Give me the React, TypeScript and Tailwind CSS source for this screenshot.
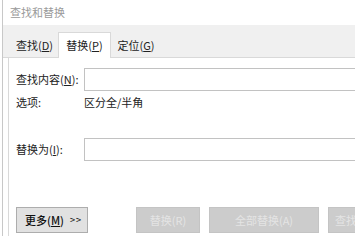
export default function App() {
  const font = { fontFamily: '"Noto Sans CJK SC", "Noto Sans", sans-serif' };

  return (
    <div className="h-[236px] w-[355px] overflow-hidden bg-white text-[11px] text-[#222]" style={font}>
      <div className="ml-[2px] flex h-full flex-col border-l border-[#c8c8c8]">
        {/* 标题栏 */}
        <div className="flex h-[25px] shrink-0 items-center pl-[7px] text-[11px] text-[#9a9a9a]">
          查找和替换
        </div>

        {/* 选项卡 */}
        <div className="flex h-[33px] shrink-0 items-end border-b border-[#d9d9d9] bg-[#f0f0f0] pl-[5px]">
          <div className="flex h-[24px] w-[50px] items-center justify-center pl-[3px]">
            查找(<u>D</u>)
          </div>
          <div className="-mb-px flex h-[26px] w-[53px] items-center justify-center border border-b-0 border-[#d9d9d9] bg-white">
            替换(<u>P</u>)
          </div>
          <div className="flex h-[24px] w-[50px] items-center justify-center">
            定位(<u>G</u>)
          </div>
        </div>

        {/* 内容 */}
        <div className="ml-[5px] flex flex-1 flex-col border-l border-[#d9d9d9] pl-[7px] pt-[10px]">
          <div className="flex h-[23px] items-center">
            <span className="w-[68px] shrink-0">
              查找内容(<u>N</u>):
            </span>
            <div className="h-full w-[300px] shrink-0 border border-[#c2c2c2] bg-white" />
          </div>
          <div className="flex h-[22px] items-center">
            <span className="w-[68px] shrink-0">选项:</span>
            <span>区分全/半角</span>
          </div>
          <div className="mt-[25px] flex h-[23px] items-center">
            <span className="w-[68px] shrink-0">
              替换为(<u>I</u>):
            </span>
            <div className="h-full w-[300px] shrink-0 border border-[#c2c2c2] bg-white" />
          </div>

          {/* 按钮 */}
          <div className="mt-[46px] flex h-[26px] items-stretch">
            <button
              type="button"
              className="flex w-[72px] shrink-0 items-center gap-[6px] border border-[#adadad] bg-[#e1e1e1] pl-[8px] text-[11px] font-medium text-[#111]"
            >
              <span>
                更多(<u>M</u>)
              </span>
              <span className="text-[9px] tracking-[1px]">&gt;&gt;</span>
            </button>
            <button
              type="button"
              className="ml-[48px] flex w-[64px] shrink-0 items-center justify-center border border-[#c4c4c4] bg-[#cccccc] text-[11px] text-[#e4e4e4]"
            >
              替换(R)
            </button>
            <button
              type="button"
              className="ml-[9px] flex w-[110px] shrink-0 items-center justify-center border border-[#c4c4c4] bg-[#cccccc] text-[11px] text-[#e4e4e4]"
            >
              全部替换(A)
            </button>
            <button
              type="button"
              className="ml-[9px] flex w-[90px] shrink-0 items-center justify-start border border-[#c4c4c4] bg-[#cccccc] pl-[6px] text-[11px] text-[#e4e4e4]"
            >
              查找下一处(F)
            </button>
          </div>
        </div>
      </div>
    </div>
  );
}
